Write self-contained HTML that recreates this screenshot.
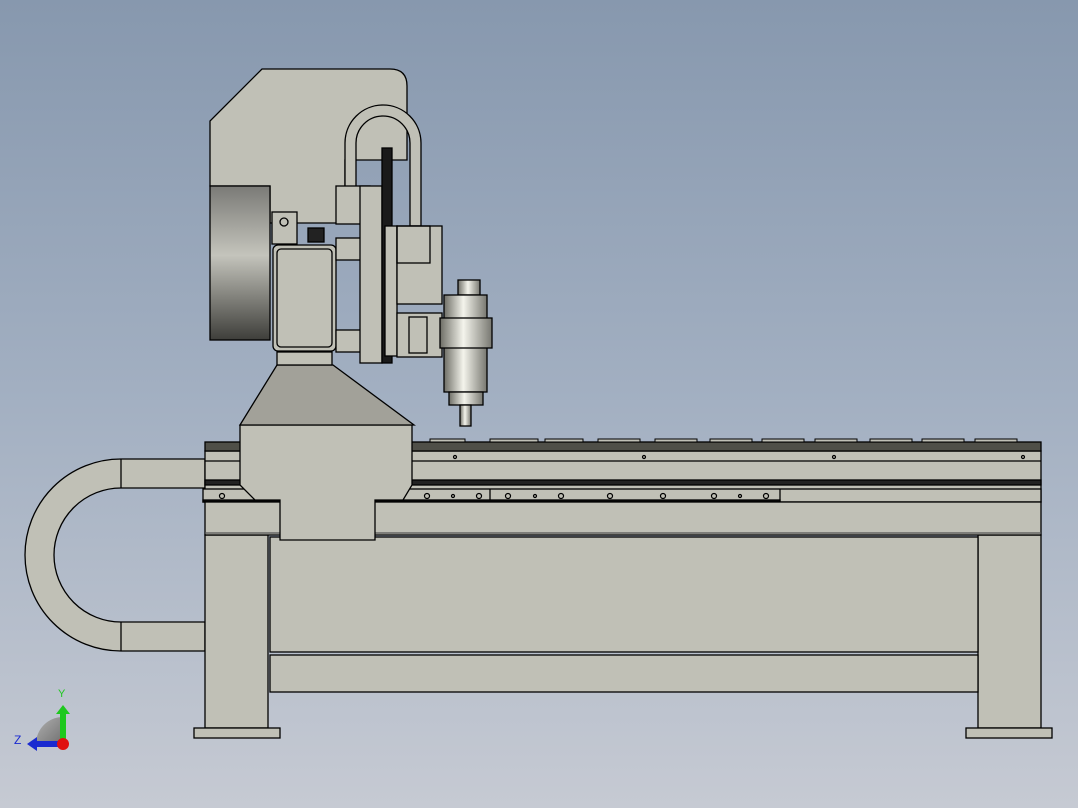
<!DOCTYPE html>
<html><head><style>
html,body{margin:0;padding:0;width:1078px;height:808px;overflow:hidden}
body{background:linear-gradient(#8798ae 0%,#a3b0c2 50%,#c6cad3 100%)}
svg{display:block}
</style></head><body>
<svg width="1078" height="808" viewBox="0 0 1078 808" xmlns="http://www.w3.org/2000/svg">
<defs>
<linearGradient id="motor" x1="0" y1="0" x2="0" y2="1">
<stop offset="0" stop-color="#7a7a76"/><stop offset="0.45" stop-color="#c4c4bc"/><stop offset="1" stop-color="#3e3e3a"/></linearGradient>
<linearGradient id="spin" x1="0" y1="0" x2="1" y2="0">
<stop offset="0" stop-color="#6e6e66"/><stop offset="0.45" stop-color="#f4f4ec"/><stop offset="1" stop-color="#777770"/></linearGradient>
<linearGradient id="gizmo" x1="0" y1="0" x2="1" y2="1"><stop offset="0" stop-color="#b0b0b0"/><stop offset="1" stop-color="#707070"/></linearGradient>
</defs>
<g stroke="#000" stroke-width="1.3" fill="#c0c0b6">
<!-- cable chain left -->
<path d="M205,459 H121 A96,96 0 0 0 121,651 H205 V622 H121 A67,67 0 0 1 121,488 H205 Z"/>
<line x1="121" y1="459" x2="121" y2="488"/><line x1="121" y1="622" x2="121" y2="651"/>
<!-- legs -->
<rect x="205" y="535" width="63" height="193"/>
<rect x="978" y="535" width="63" height="193"/>
<rect x="194" y="728" width="86" height="10"/>
<rect x="966" y="728" width="86" height="10"/>
<!-- center panels -->
<rect x="270" y="537" width="708" height="115"/>
<rect x="270" y="655" width="708" height="37"/>
<!-- table rails -->
<rect x="205" y="451" width="836" height="51"/>
<line x1="205" y1="461" x2="1041" y2="461"/>
<rect x="205" y="480" width="836" height="5" fill="#222"/>
<rect x="203" y="489" width="838" height="13"/>
<line x1="490" y1="489" x2="490" y2="502"/><line x1="780" y1="489" x2="780" y2="502"/>
<rect x="203" y="500" width="577" height="2" fill="#111"/>
<rect x="205" y="442" width="836" height="9" fill="#4f4f48"/>
<rect x="205" y="502" width="836" height="33"/>
<line x1="205" y1="533" x2="1041" y2="533" stroke="#555"/>
</g>
<!-- slats on top -->
<g fill="#c0c0b6" stroke="#000" stroke-width="1">
<rect x="430" y="439" width="35" height="3"/><rect x="490" y="439" width="48" height="3"/><rect x="545" y="439" width="38" height="3"/><rect x="598" y="439" width="42" height="3"/><rect x="655" y="439" width="42" height="3"/><rect x="710" y="439" width="42" height="3"/><rect x="762" y="439" width="42" height="3"/><rect x="815" y="439" width="42" height="3"/><rect x="870" y="439" width="42" height="3"/><rect x="922" y="439" width="42" height="3"/><rect x="975" y="439" width="42" height="3"/>
</g>
<g fill="none" stroke="#000" stroke-width="1.2">
<circle cx="427" cy="496" r="2.5"/><circle cx="453" cy="496" r="1.5"/><circle cx="479" cy="496" r="2.5"/><circle cx="508" cy="496" r="2.5"/><circle cx="535" cy="496" r="1.5"/><circle cx="561" cy="496" r="2.5"/><circle cx="610" cy="496" r="2.5"/><circle cx="663" cy="496" r="2.5"/><circle cx="714" cy="496" r="2.5"/><circle cx="740" cy="496" r="1.5"/><circle cx="766" cy="496" r="2.5"/><circle cx="222" cy="496" r="2.5"/>
<circle cx="455" cy="457" r="1.5"/><circle cx="644" cy="457" r="1.5"/><circle cx="834" cy="457" r="1.5"/><circle cx="1023" cy="457" r="1.5"/>
</g>
<!-- gantry -->
<g stroke="#000" stroke-width="1.3">
<path d="M240,425 H412 V485 L403,500 H375 V540 H280 V500 H255 L240,485 Z" fill="#c0c0b6"/>
<path d="M277,365 H333 L414,425 H240 Z" fill="#a2a199"/>
<rect x="277" y="352" width="55" height="13" fill="#c0c0b6"/>
<!-- head plate -->
<path d="M262,69 H390 Q407,69 407,86 V110 L407,160 H345 V223 H270 V186 H210 V121 Z" fill="#c0c0b6"/>
<!-- chain arc -->
<path d="M345,195 V143 A38,38 0 0 1 421,143 V226 H410 V143 A27,27 0 0 0 356,143 V195 Z" fill="#c0c0b6"/>
<!-- motor -->
<rect x="210" y="186" width="60" height="154" fill="url(#motor)"/>
<!-- eye bolt block -->
<rect x="272" y="212" width="25" height="32" fill="#c0c0b6"/>
<circle cx="284" cy="222" r="4" fill="none"/>
<rect x="308" y="228" width="16" height="14" fill="#222"/>
<rect x="273" y="245" width="63" height="106" rx="5" fill="#c0c0b6"/>
<rect x="277" y="249" width="55" height="98" rx="4" fill="none"/>
<rect x="336" y="186" width="34" height="38" fill="#c0c0b6"/>
<rect x="336" y="238" width="25" height="22" fill="#c0c0b6"/>
<rect x="336" y="330" width="25" height="22" fill="#c0c0b6"/>
<rect x="360" y="186" width="22" height="177" fill="#c0c0b6"/>
<rect x="382" y="148" width="10" height="215" fill="#1a1a1a"/>
<rect x="385" y="226" width="12" height="130" fill="#c0c0b6"/>
<!-- z carriage -->
<rect x="397" y="226" width="45" height="78" fill="#c0c0b6"/>
<rect x="397" y="226" width="33" height="37" fill="none"/>
<rect x="397" y="313" width="45" height="44" fill="#c0c0b6"/>
<rect x="409" y="317" width="18" height="36" fill="none"/>
<!-- spindle -->
<rect x="458" y="280" width="22" height="15" fill="url(#spin)"/>
<rect x="444" y="295" width="43" height="97" fill="url(#spin)"/>
<rect x="440" y="318" width="52" height="30" fill="url(#spin)"/>
<rect x="449" y="392" width="34" height="13" fill="url(#spin)"/>
<rect x="460" y="405" width="11" height="21" fill="url(#spin)"/>
</g>
<!-- gizmo -->
<path d="M36,744 A27,27 0 0 1 63,717 V744 Z" fill="url(#gizmo)"/>
<rect x="60" y="712" width="6" height="32" fill="#1ec81e"/>
<path d="M56,714 L63,705 L70,714 Z" fill="#1ec81e"/>
<rect x="36" y="741" width="27" height="6" fill="#1a2ad0"/>
<path d="M37,737 L27,744 L37,751 Z" fill="#1a2ad0"/>
<circle cx="63" cy="744" r="6" fill="#e01010"/>
<text x="58" y="697" font-family="Liberation Sans,sans-serif" font-size="11" fill="#1ec81e">Y</text>
<text x="14" y="744" font-family="Liberation Sans,sans-serif" font-size="12" fill="#1a2ad0">Z</text>
</svg>
</body></html>
